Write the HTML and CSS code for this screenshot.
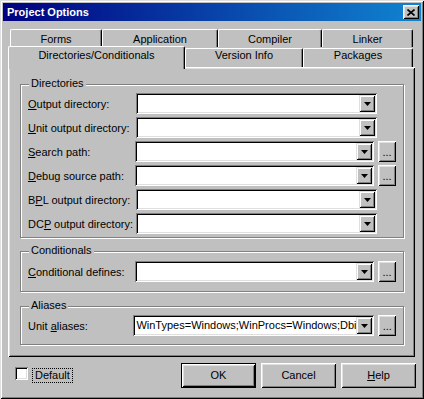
FILE: index.html
```html
<!DOCTYPE html>
<html lang="en">
<head>
    <meta charset="utf-8"/>
    <title>Project Options</title>
    <link rel="stylesheet" href="styles.css">
</head>
<body>
<div class="window">
    <div class="titlebar">
        <span class="title">Project Options</span>
        <span class="closeBtn">
            <svg width="8" height="7" viewBox="0 0 8 7"><path d="M0.5 0.5L7.5 6.5M7.5 0.5L0.5 6.5" stroke="#000" stroke-width="1.6"/></svg>
        </span>
    </div>

    <div class="tabs">
        <div class="tabRow backRow">
            <div class="tab tabForms">Forms</div>
            <div class="tab tabApp">Application</div>
            <div class="tab tabCompiler">Compiler</div>
            <div class="tab tabLinker">Linker</div>
        </div>
        <div class="tabRow frontRow">
            <div class="tab tabSel">Directories/Conditionals</div>
            <div class="tab tabVersion">Version Info</div>
            <div class="tab tabPackages">Packages</div>
        </div>

        <div class="page">
            <div class="group groupDirs">
                <span class="caption">Directories</span>
                <div class="row">
                    <span class="fieldLabel"><u>O</u>utput directory:</span>
                    <div class="combo"><span class="comboText"></span><span class="dropBtn"><svg width="7" height="4" viewBox="0 0 7 4"><path d="M0 0H7L3.5 4Z"/></svg></span></div>
                </div>
                <div class="row">
                    <span class="fieldLabel"><u>U</u>nit output directory:</span>
                    <div class="combo"><span class="comboText"></span><span class="dropBtn"><svg width="7" height="4" viewBox="0 0 7 4"><path d="M0 0H7L3.5 4Z"/></svg></span></div>
                </div>
                <div class="row">
                    <span class="fieldLabel"><u>S</u>earch path:</span>
                    <div class="combo"><span class="comboText"></span><span class="dropBtn"><svg width="7" height="4" viewBox="0 0 7 4"><path d="M0 0H7L3.5 4Z"/></svg></span></div>
                    <span class="ellipsisBtn">...</span>
                </div>
                <div class="row">
                    <span class="fieldLabel"><u>D</u>ebug source path:</span>
                    <div class="combo"><span class="comboText"></span><span class="dropBtn"><svg width="7" height="4" viewBox="0 0 7 4"><path d="M0 0H7L3.5 4Z"/></svg></span></div>
                    <span class="ellipsisBtn">...</span>
                </div>
                <div class="row">
                    <span class="fieldLabel">B<u>P</u>L output directory:</span>
                    <div class="combo"><span class="comboText"></span><span class="dropBtn"><svg width="7" height="4" viewBox="0 0 7 4"><path d="M0 0H7L3.5 4Z"/></svg></span></div>
                </div>
                <div class="row">
                    <span class="fieldLabel">DC<u>P</u> output directory:</span>
                    <div class="combo"><span class="comboText"></span><span class="dropBtn"><svg width="7" height="4" viewBox="0 0 7 4"><path d="M0 0H7L3.5 4Z"/></svg></span></div>
                </div>
            </div>

            <div class="group groupCond">
                <span class="caption">Conditionals</span>
                <div class="row">
                    <span class="fieldLabel"><u>C</u>onditional defines:</span>
                    <div class="combo"><span class="comboText"></span><span class="dropBtn"><svg width="7" height="4" viewBox="0 0 7 4"><path d="M0 0H7L3.5 4Z"/></svg></span></div>
                    <span class="ellipsisBtn">...</span>
                </div>
            </div>

            <div class="group groupAlias">
                <span class="caption">Aliases</span>
                <div class="row">
                    <span class="fieldLabel">Unit <u>a</u>liases:</span>
                    <div class="combo"><span class="comboText">WinTypes=Windows;WinProcs=Windows;Dbi</span><span class="dropBtn"><svg width="7" height="4" viewBox="0 0 7 4"><path d="M0 0H7L3.5 4Z"/></svg></span></div>
                    <span class="ellipsisBtn">...</span>
                </div>
            </div>
        </div>
    </div>

    <div class="footer">
        <span class="checkbox"></span>
        <span class="checkLabel">Default</span>
        <div class="buttons">
            <span class="button defaultButton">OK</span>
            <span class="button">Cancel</span>
            <span class="button"><u>H</u>elp</span>
        </div>
    </div>
</div>
</body>
</html>
```

FILE: styles.css
```css
body{
    margin: 0;
    font-family: "Liberation Sans", Arial, sans-serif;
    font-size: 11px;
    color: #000;
}
u{
    text-decoration-thickness: 1px;
    text-underline-offset: 1px;
}
.window{
    box-sizing: border-box;
    width: 424px;
    height: 399px;
    padding: 3px;
    background: #c0c0c0;
    box-shadow: inset 1px 1px #dfdfdf, inset -1px -1px #000, inset 2px 2px #fff, inset -2px -2px #808080;
}
.titlebar{
    display: flex;
    align-items: center;
    height: 18px;
    padding-left: 4px;
    background: linear-gradient(to right, #000080, #1084d0);
}
.title{
    flex: 1;
    color: #fff;
    font-weight: bold;
    font-size: 11px;
}
.closeBtn{
    display: flex;
    align-items: center;
    justify-content: center;
    box-sizing: border-box;
    width: 16px;
    height: 14px;
    margin-right: 2px;
    background: #c0c0c0;
    box-shadow: inset 1px 1px #fff, inset -1px -1px #000, inset 2px 2px #dfdfdf, inset -2px -2px #808080;
}

/* tab control */
.tabs{
    width: 407px;
    margin: 8px 0 0 5px;
}
.tabRow{
    display: flex;
}
.backRow{
    height: 18px;
    padding-left: 2px;
}
.frontRow{
    height: 20px;
    padding-right: 2px;
}
.tab{
    box-sizing: border-box;
    text-align: center;
    line-height: 13px;
    background: #c0c0c0;
    border-top: 1px solid #fff;
    border-left: 1px solid #fff;
    border-right: 1px solid #000;
    border-radius: 2px 2px 0 0;
    box-shadow: inset -1px 0 #808080;
}
.backRow .tab{
    height: 18px;
    padding-top: 3px;
}
.frontRow .tab{
    height: 19px;
    margin-top: 1px;
}
.frontRow .tabSel{
    position: relative;
    z-index: 1;
    height: 23px;
    margin-top: -1px;
    padding-top: 2px;
}
.tabForms{ width: 92px; }
.tabApp{ width: 116px; }
.tabCompiler{ width: 104px; }
.tabLinker{ width: 91px; }
.tabSel{ width: 177px; }
.tabVersion{ width: 118px; }
.tabPackages{ width: 110px; }

.page{
    box-sizing: border-box;
    height: 290px;
    padding: 17px 11px 0 12px;
    box-shadow: inset 1px 1px #fff, inset -1px -1px #000, inset 2px 2px #dfdfdf, inset -2px -2px #808080;
}

/* group boxes */
.group{
    position: relative;
    box-sizing: border-box;
    width: 384px;
    border: 1px solid #808080;
    box-shadow: inset 1px 1px #fff, 1px 1px #fff;
    padding: 8px 7px 3px 7px;
}
.groupCond{
    margin-top: 13px;
    padding: 9px 7px 9px 7px;
}
.groupAlias{
    margin-top: 14px;
    padding: 8px 7px 8px 7px;
}
.caption{
    position: absolute;
    top: -8px;
    left: 8px;
    padding: 0 2px;
    line-height: 13px;
    background: #c0c0c0;
}
.row{
    display: flex;
    align-items: center;
    height: 21px;
}
.row + .row{
    margin-top: 3px;
}
.fieldLabel{
    width: 108px;
}
.combo{
    display: flex;
    box-sizing: border-box;
    width: 241px;
    height: 21px;
    padding: 2px;
    background: #fff;
    box-shadow: inset 1px 1px #808080, inset -1px -1px #fff, inset 2px 2px #000, inset -2px -2px #dfdfdf;
}
.comboText{
    flex: 1;
    overflow: hidden;
    white-space: nowrap;
    line-height: 17px;
    padding-left: 1px;
}
.dropBtn{
    display: flex;
    align-items: center;
    justify-content: center;
    box-sizing: border-box;
    width: 16px;
    height: 17px;
    background: #c0c0c0;
    box-shadow: inset 1px 1px #dfdfdf, inset -1px -1px #000, inset 2px 2px #fff, inset -2px -2px #808080;
}
.ellipsisBtn{
    box-sizing: border-box;
    width: 18px;
    height: 21px;
    margin-left: 4px;
    padding-top: 5px;
    text-align: center;
    line-height: 13px;
    background: #c0c0c0;
    box-shadow: inset 1px 1px #fff, inset -1px -1px #000, inset 2px 2px #dfdfdf, inset -2px -2px #808080;
}

/* bottom row */
.footer{
    display: flex;
    align-items: flex-start;
    width: 408px;
    height: 25px;
    margin: 6px 0 0 5px;
}
.checkbox{
    box-sizing: border-box;
    width: 13px;
    height: 13px;
    margin: 4px 0 0 7px;
    background: #fff;
    box-shadow: inset 1px 1px #808080, inset -1px -1px #fff, inset 2px 2px #000, inset -2px -2px #dfdfdf;
}
.checkLabel{
    margin: 5px 0 0 4px;
    padding: 0 2px;
    line-height: 13px;
    border: 1px dotted #000;
}
.buttons{
    display: flex;
    gap: 5px;
    margin-left: auto;
}
.button{
    box-sizing: border-box;
    width: 75px;
    height: 25px;
    line-height: 25px;
    text-align: center;
    background: #c0c0c0;
    box-shadow: inset 1px 1px #fff, inset -1px -1px #000, inset 2px 2px #dfdfdf, inset -2px -2px #808080;
}
.defaultButton{
    line-height: 23px;
    border: 1px solid #000;
}
```
